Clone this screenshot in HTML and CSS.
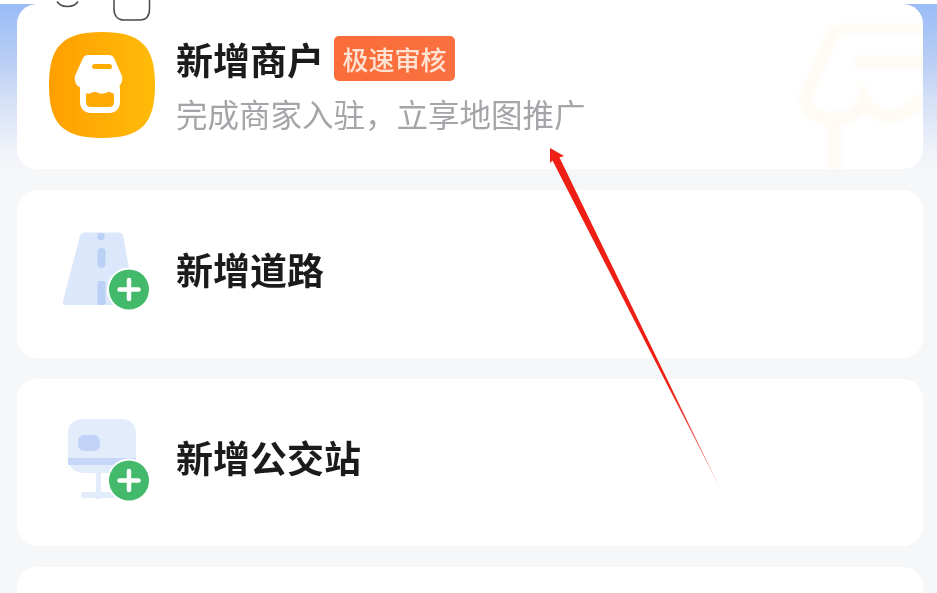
FILE: index.html
```html
<!DOCTYPE html>
<html lang="zh-CN">
<head>
<meta charset="utf-8">
<title>新增</title>
<link rel="stylesheet" href="styles.css">
</head>
<body>
<main class="screen">
  <svg class="peek" width="160" height="24" viewBox="0 0 160 24" aria-hidden="true">
    <path d="M57 1.5C61 8 74 8 78 1.5" />
    <path d="M114 0V9C114 16 118 20 124 20H140C146 20 149.500 16 149.500 9V0" />
  </svg>
  <div class="list">
    <section class="card card-first">
      <svg class="ghost" width="123" height="144" viewBox="0 0 123 144" aria-hidden="true">
        <path d="M36 2H123M36 2L6 70C4 88 20 96 36 92C52 96 62 82 64 74C70 88 88 96 104 88C112 84 118 78 123 72M34 92V144M56 38H123" />
      </svg>
      <div class="slot">
        <svg width="106" height="106" viewBox="0 0 106 106" aria-hidden="true">
          <defs>
            <linearGradient id="shop" x1="0" x2="1" y1="0" y2="0">
              <stop offset="0" stop-color="#ff9f00"/>
              <stop offset="1" stop-color="#ffbb08"/>
            </linearGradient>
          </defs>
          <path d="M53 0C92 0 106 14 106 53C106 92 92 106 53 106C14 106 0 92 0 53C0 14 14 0 53 0Z" fill="url(#shop)"/>
          <path d="M34 26C35 24 37 23 39 23H60C62 23 64 24 65 26L73 44C74 49 72 54 67 56H32C27 54 25 49 26 44Z" fill="#fff"/>
          <rect x="43" y="32" width="20" height="5" rx="2.500" fill="#ffab04"/>
          <path d="M34 56C38 60 42 59 46 55C50 60 56 60 60 55C63 59 66 60 68 56V70C68 75 65 78 60 78H42C37 78 34 75 34 70Z" fill="#ffab04" stroke="#fff" stroke-width="6" stroke-linejoin="round"/>
        </svg>
      </div>
      <div class="text">
        <div class="title-row">
          <h2 class="title">新增商户</h2>
          <span class="badge">极速审核</span>
        </div>
        <p class="sub">完成商家入驻&#xFF0C;立享地图推广</p>
      </div>
    </section>
    <section class="card card-plain">
      <div class="slot">
        <svg width="106" height="106" viewBox="0 0 106 106" aria-hidden="true">
          <path d="M34 12C35 11.500 36 11.500 37 11.500H70C72 11.500 73 12.500 74 14L86 80C86.500 83 85 84 82 84H17C14.500 84 13 82.500 14 80L31 15C31.500 13.500 32.500 12.500 34 12Z" fill="#dbe7fb"/>
          <rect x="48.500" y="12" width="7" height="7" rx="2.500" fill="#bbd0f5"/>
          <rect x="48.500" y="27" width="8" height="20" rx="4" fill="#bbd0f5"/>
          <rect x="48.500" y="60" width="8" height="24" rx="2" fill="#bbd0f5"/>
          <circle cx="80" cy="68.500" r="22" fill="#fff"/>
          <circle cx="80" cy="68.500" r="20" fill="#43ba6b"/>
          <path d="M80 59V78M70.500 68.500H89.500" stroke="#fff" stroke-width="4.500" stroke-linecap="round"/>
        </svg>
      </div>
      <h2 class="title">新增道路</h2>
    </section>
    <section class="card card-plain">
      <div class="slot">
        <svg width="106" height="106" viewBox="0 0 106 106" aria-hidden="true">
          <rect x="47" y="60" width="5" height="30" fill="#e3ecfb"/>
          <rect x="32" y="83" width="36" height="6" rx="3" fill="#e3ecfb"/>
          <path d="M19 24C19 15 25 10 34 10H72C81 10 87 15 87 24V52C87 60 78 64 70 64H36C26 64 19 58 19 50Z" fill="#e3ecfb"/>
          <path d="M19 49H87V56H19Z" fill="#c6d7f7"/>
          <rect x="29" y="26" width="22" height="16" rx="6" fill="#c1d3f6"/>
          <circle cx="80" cy="71.500" r="22" fill="#fff"/>
          <circle cx="80" cy="71.500" r="20" fill="#43ba6b"/>
          <path d="M80 62V81M70.500 71.500H89.500" stroke="#fff" stroke-width="4.500" stroke-linecap="round"/>
        </svg>
      </div>
      <h2 class="title">新增公交站</h2>
    </section>
    <section class="card"></section>
  </div>
  <svg class="arrow" width="937" height="593" viewBox="0 0 937 593" aria-hidden="true">
    <defs>
      <linearGradient id="fade" gradientUnits="userSpaceOnUse" x1="670" y1="385" x2="720" y2="488">
        <stop offset="0" stop-color="#ee2015"/>
        <stop offset="1" stop-color="#f3a8a0"/>
      </linearGradient>
    </defs>
    <path d="M550 148L564 156L559.500 157.500L720 488L552.500 160.500L550 163Z" fill="url(#fade)"/>
  </svg>
</main>
</body>
</html>
```
FILE: styles.css
```css
* { box-sizing: border-box; }
html, body { margin: 0; height: 100%; background: #fff; }
body { overflow: hidden; font-family: "Noto Sans CJK SC", "Noto Sans", sans-serif; }

.screen {
  position: relative;
  width: 937px;
  height: 593px;
  overflow: hidden;
  padding-top: 4px;
}
.list {
  height: 589px;
  display: flex;
  flex-direction: column;
  gap: 21px;
  padding: 0 14px 0 17px;
  background: linear-gradient(180deg, #9bbcf7 0, #b8cdf5 56px, #d5e0f7 96px, #eff2f9 146px, #f6f7f9 166px, #f6f7f9 100%);
}
.card {
  position: relative;
  flex: 0 0 167.5px;
  display: flex;
  align-items: center;
  gap: 21px;
  padding-left: 32px;
  background: #fff;
  border-radius: 20px;
  overflow: hidden;
}
.card-first { flex-basis: 165px; padding-bottom: 4px; }
.card-plain { padding-bottom: 0; }
.card-plain .title { position: relative; top: -5px; filter: blur(0.4px); }
.slot { flex: 0 0 106px; height: 106px; display: flex; filter: blur(0.6px); }
.text { display: flex; flex-direction: column; gap: 9px; padding-top: 1px; filter: blur(0.4px); }
.title-row { display: flex; align-items: center; gap: 10px; }
.title {
  margin: 0;
  font-size: 37px;
  line-height: 46px;
  font-weight: 700;
  color: #1b1b1d;
  white-space: nowrap;
}
.badge {
  width: 121px;
  height: 45px;
  display: flex;
  align-items: center;
  justify-content: center;
  font-size: 26px;
  font-weight: 500;
  color: #ffe3d4;
  background: linear-gradient(90deg, #fb6d3a, #fa7040);
  border-radius: 5px;
}
.sub {
  margin: 0;
  font-size: 31.500px;
  line-height: 44px;
  color: #a4a5a8;
  white-space: nowrap;
}
.ghost {
  position: absolute;
  right: 0;
  top: 21px;
  fill: none;
  stroke: #fffaf3;
  stroke-width: 12;
  filter: blur(2px);
}
.peek {
  position: absolute;
  left: 0;
  top: 0;
  z-index: 2;
  fill: none;
  stroke: #4a4a4c;
  stroke-width: 1.500;
  filter: blur(0.4px);
}
.arrow { position: absolute; left: 0; top: 0; z-index: 3; }
```
